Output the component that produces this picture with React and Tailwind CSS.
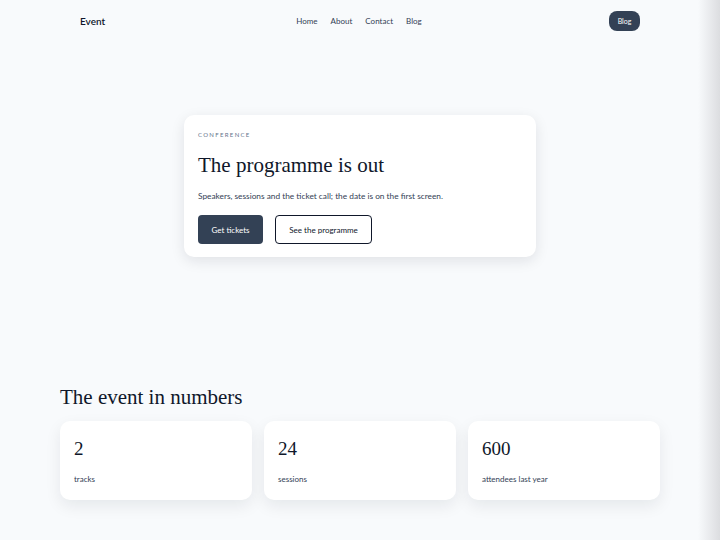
import React from 'react';

const serif = { fontFamily: '"Liberation Serif", "DejaVu Serif", serif' };

const stats = [
  { value: '2', label: 'tracks' },
  { value: '24', label: 'sessions' },
  { value: '600', label: 'attendees last year' },
];

const App = () => {
  return (
    <div
      className="relative min-h-[540px] w-full overflow-hidden bg-[#f8fafc] text-[#1e293b]"
      style={{ fontFamily: 'Lato, "Noto Sans", sans-serif' }}
    >
      {/* Top navigation */}
      <header className="mx-auto flex h-[42px] w-[560px] items-center">
        <div className="flex flex-1 items-center">
          <a href="#" className="text-[10px] font-semibold leading-none text-[#0f172a]">Event</a>
        </div>
        <nav className="mr-[2px] flex items-center gap-[13px] text-[8px] text-[#334155]">
          <a href="#">Home</a>
          <a href="#">About</a>
          <a href="#">Contact</a>
          <a href="#">Blog</a>
        </nav>
        <div className="flex flex-1 justify-end">
          <a
            href="#"
            className="flex h-[20px] w-[31px] items-center justify-center rounded-[8px] bg-[#334155] text-[7px] text-white"
          >
            Blog
          </a>
        </div>
      </header>

      {/* Hero card */}
      <section className="flex justify-center pt-[73px]">
        <div className="w-[352px] rounded-[10px] bg-white px-[14px] pt-[15px] pb-[13px] shadow-[0_4px_14px_rgba(15,23,42,0.10)]">
          <p className="text-[6px] uppercase tracking-[0.22em] text-[#64748b]">Conference</p>
          <h1 className="mt-[13px] text-[21px] leading-[26px] text-[#0f172a]" style={serif}>
            The programme is out
          </h1>
          <p className="mt-[12px] text-[8.3px] text-[#334155]">
            Speakers, sessions and the ticket call; the date is on the first screen.
          </p>
          <div className="mt-[13px] flex gap-[12px]">
            <a
              href="#"
              className="flex h-[29px] w-[65px] items-center justify-center rounded-[4px] bg-[#334155] text-[8px] text-white"
            >
              Get tickets
            </a>
            <a
              href="#"
              className="flex h-[29px] w-[97px] items-center justify-center rounded-[4px] border border-[#0f172a] bg-white text-[8px] text-[#0f172a]"
            >
              See the programme
            </a>
          </div>
        </div>
      </section>

      {/* Numbers */}
      <section className="mx-auto mt-[127px] w-[600px]">
        <h2 className="text-[21px] leading-[26px] text-[#0f172a]" style={serif}>
          The event in numbers
        </h2>
        <div className="mt-[11px] grid grid-cols-3 gap-[12px]">
          {stats.map((s) => (
            <div
              key={s.label}
              className="h-[79px] rounded-[10px] bg-white px-[14px] pt-[17px] shadow-[0_6px_16px_rgba(15,23,42,0.08)]"
            >
              <div className="text-[19px] leading-[22px] text-[#0f172a]" style={serif}>{s.value}</div>
              <div className="mt-[13px] text-[8px] text-[#334155]">{s.label}</div>
            </div>
          ))}
        </div>
      </section>

      {/* Right edge shade */}
      <div className="pointer-events-none absolute inset-y-0 right-0 w-[22px] bg-gradient-to-r from-transparent to-[#dcdde0]" />
    </div>
  );
};

export default App;
